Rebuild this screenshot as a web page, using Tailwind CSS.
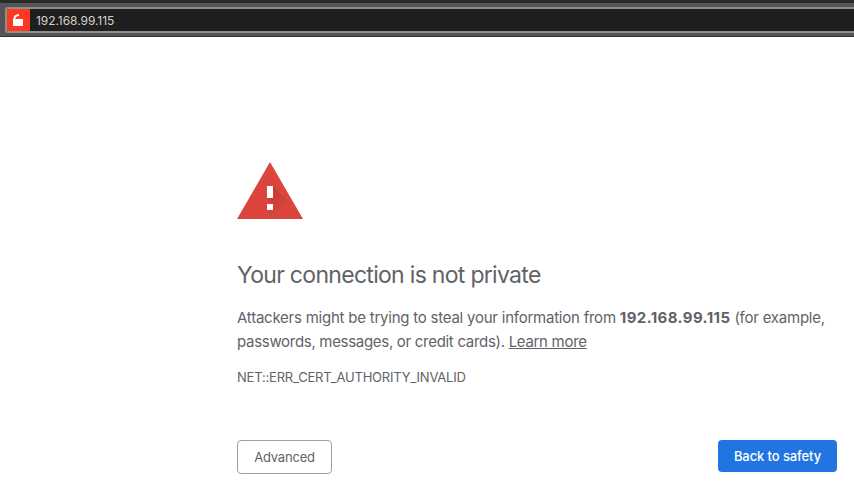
<!DOCTYPE html>
<html lang="en">
<head>
<meta charset="utf-8">
<title>Privacy error</title>
<script src="https://cdn.jsdelivr.net/npm/@tailwindcss/browser@4"></script>
</head>
<body class="h-screen overflow-hidden bg-white font-['Inter','Liberation_Sans',sans-serif] text-[#5f6368]">
<header class="h-[37px] border-t-[3px] border-b border-t-[#2b2b2b] border-b-[#303030] bg-[#555555] pt-1 pl-[5px]">
  <div class="flex h-[26px] items-center rounded-l-[3px] border-2 border-r-0 border-[#8f8f8f] bg-[#1f1f1f]">
    <div class="flex h-[22px] w-[23px] items-center justify-center rounded-[1px] bg-[#ff3820]">
      <svg class="h-[22px] w-[23px]" viewBox="0 0 23 22" fill="none">
        <path d="M6 10h10v7H6z" fill="#fff"/>
        <path d="M7.5 10.5V9Q7.8 6.2 12 5.9" stroke="#fff" stroke-width="2"/>
      </svg>
    </div>
    <span class="ml-[6px] pt-px text-[12px] tracking-[-0.05px] text-[#d5d2c9]">192.168.99.115</span>
  </div>
</header>
<main class="ml-[237px] w-[600px] pt-[125px]">
  <svg class="block h-[57px] w-[66px]" viewBox="0 0 66 57">
    <defs>
      <linearGradient id="shade" gradientUnits="userSpaceOnUse" x1="34" y1="28" x2="48" y2="50">
        <stop offset="0" stop-color="#c23d33"/>
        <stop offset="1" stop-color="#db453d"/>
      </linearGradient>
    </defs>
    <path d="M33 0L66 57H0Z" fill="#db453d"/>
    <path d="M36 24L52 40L62 57H39L30 48L36 42L30 36Z" fill="url(#shade)"/>
    <path d="M30 24h6v12h-6zM30 42h6v6h-6z" fill="#fff"/>
  </svg>
  <h1 class="mt-[41px] text-[23px] leading-[30px] tracking-[-0.7px] whitespace-nowrap">Your connection is not private</h1>
  <p class="mt-4 text-[15px] leading-6 whitespace-nowrap"><span class="tracking-[-0.23px]">Attackers might be trying to steal your information from <b class="font-bold tracking-[0.4px]">192.168.99.115</b> (for example,</span><br><span class="tracking-[-0.3px]">passwords, messages, or credit cards). <a class="underline">Learn more</a></span></p>
  <p class="mt-[13px] text-[13px] leading-[20px] tracking-[-0.2px]">NET::ERR_CERT_AUTHORITY_INVALID</p>
  <div class="mt-[53px] flex items-start justify-between">
    <button class="h-[34px] w-[95px] rounded-[4px] border border-[#9aa0a6] pt-0.5 text-[13px] tracking-[-0.2px]">Advanced</button>
    <button class="h-8 w-[119px] rounded-[4px] bg-[#2175e3] pt-0.5 text-[13px] font-medium tracking-[-0.1px] text-white">Back to safety</button>
  </div>
</main>
</body>
</html>
